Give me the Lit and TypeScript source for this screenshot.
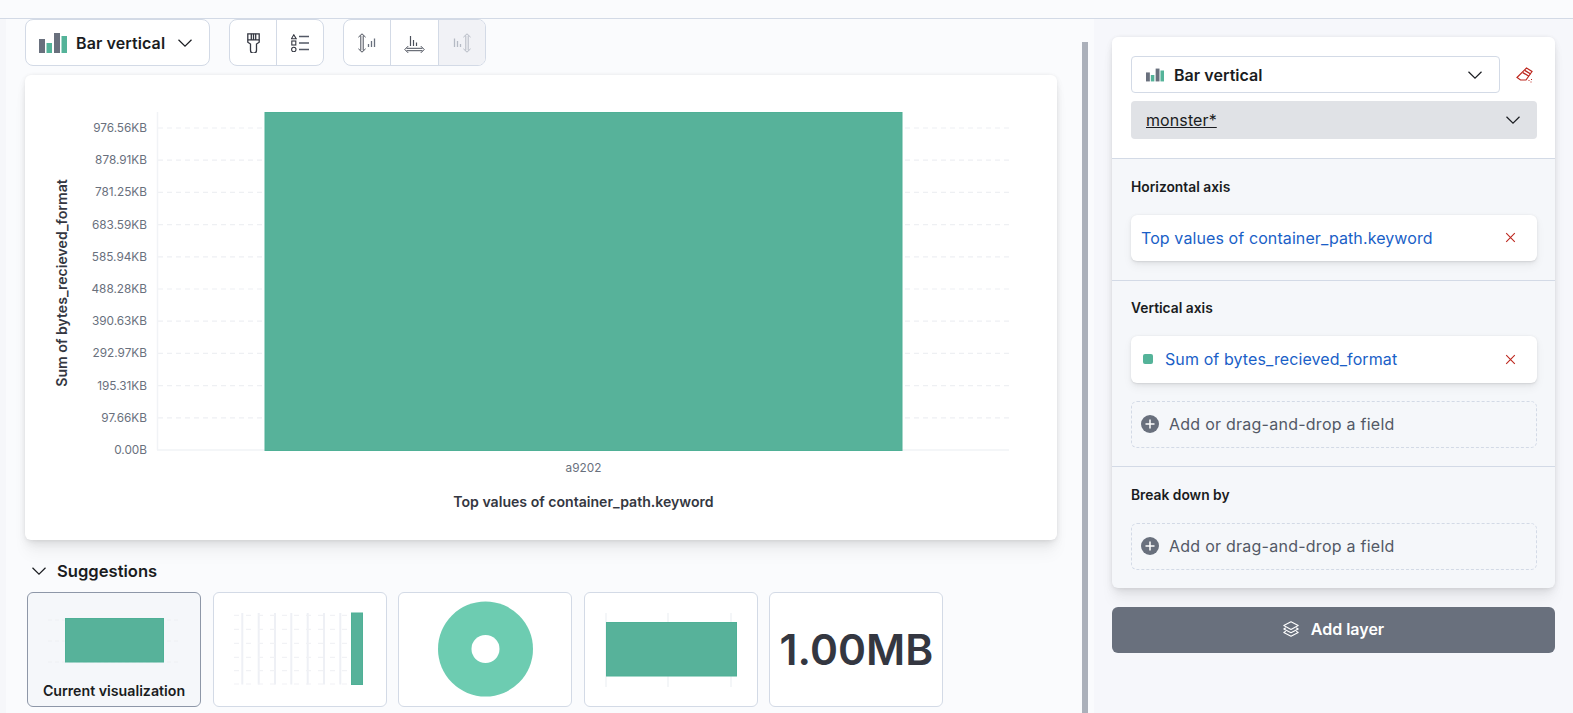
import { LitElement, html, css, svg, CSSResult, TemplateResult } from "lit";
import { customElement } from "lit/decorators.js";

const GREEN = "#54b399";
const TICKS = [
    "976.56KB", "878.91KB", "781.25KB", "683.59KB", "585.94KB",
    "488.28KB", "390.63KB", "292.97KB", "195.31KB", "97.66KB", "0.00B",
];

const chevron = (size = 16): TemplateResult => html`
    <svg width=${size} height=${size} viewBox="0 0 16 16" fill="none" stroke="#1a1c21" stroke-width="1.2">
        <path d="M1.5 4.800 8 11.200l6.500-6.400" />
    </svg>
`;

const barsIcon = (w: number, h: number): TemplateResult => html`
    <svg width=${w} height=${h} viewBox="0 0 28 20">
        <rect x="0" y="6" width="6" height="14" fill="#69707d" />
        <rect x="7.500" y="10" width="5.500" height="10" fill=${GREEN} />
        <rect x="15" y="0" width="6" height="20" fill="#69707d" />
        <rect x="22.500" y="3" width="5.500" height="17" fill=${GREEN} />
    </svg>
`;

const closeIcon = html`
    <svg width="11" height="11" viewBox="0 0 11 11" stroke="#bd271e" stroke-width="1.1" fill="none">
        <path d="M1.200 1.200l8.600 8.600M9.800 1.200l-8.600 8.600" />
    </svg>
`;

const plusIcon = html`
    <svg width="18" height="18" viewBox="0 0 18 18">
        <circle cx="9" cy="9" r="9" fill="#69707d" />
        <path d="M9 4.500v9M4.500 9h9" stroke="#fff" stroke-width="1.500" />
    </svg>
`;

const brushIcon = html`
    <svg width="13" height="20" viewBox="0 0 13 20" fill="none" stroke="#343741" stroke-width="1.300">
        <path d="M.8.800h11.400v8.400L9.500 11v6.200a3 3 0 0 1-6 0V11L.8 9.200z" />
        <path d="M.8 6.800h11.400M4.300.8v6M6.500.8v6M8.700.8v6" />
    </svg>
`;

const legendIcon = html`
    <svg width="18" height="18" viewBox="0 0 18 18" fill="none" stroke="#343741" stroke-width="1.100">
        <path d="M2.800.8 5.200 4.800H.4z" />
        <rect x=".8" y="7" width="4" height="4" />
        <circle cx="2.800" cy="15.500" r="2.200" />
        <path d="M8 2.500h10M8 9h10M8 15.500h10" stroke="#535966" stroke-width="1.400" />
    </svg>
`;

const vArrow = (x: number, c: string) => svg`
    <path d="M${x - 3.6} 4.200 ${x} .8l3.600 3.400M${x - 3.6} 15.800 ${x} 19.200l3.600-3.400M${x - 1.2} 2.600v14.800M${x + 1.2} 2.600v14.800"
        stroke=${c} fill="none" stroke-width="1" />
`;

const axisLeftIcon = html`
    <svg width="18" height="20" viewBox="0 0 18 20">
        ${vArrow(4, "#4a4f5a")}
        <path d="M10.500 14v-3M13.500 14V8M16.500 14V5.500" stroke="#69707d" stroke-width="1.300" fill="none" />
    </svg>
`;

const axisBottomIcon = html`
    <svg width="21" height="20" viewBox="0 0 21 20" fill="none" stroke="#4a4f5a" stroke-width="1">
        <path d="M6.500 13V3M9.500 13V7M12.500 13V9.500" stroke-width="1.200" />
        <path d="M4.200 13.100.8 16.500l3.400 3.400M16.800 13.100l3.400 3.400-3.400 3.400M2.600 15.300h15.800M2.600 17.700h15.800" />
    </svg>
`;

const axisRightIcon = html`
    <svg width="18" height="20" viewBox="0 0 18 20">
        <path d="M1.500 14V5.500M4.500 14V8M7.500 14v-3" stroke="#b5bac4" stroke-width="1.300" fill="none" />
        ${vArrow(14, "#b5bac4")}
    </svg>
`;

const eraserIcon = html`
    <svg width="17" height="16" viewBox="0 0 17 16" fill="none" stroke="#bd271e" stroke-width="1.200">
        <path d="M10.500 1 16 4.500 10 13H4.500L1 10.500z" />
        <path d="M6.800 5.600 13 9.300M8.700 3.400l6 3.600" stroke-width="1.300" />
        <path d="M12.500 13.500h1M15 12.500h1M14.500 15h1" />
    </svg>
`;

const layersIcon = html`
    <svg width="16" height="16" viewBox="0 0 16 16" fill="none" stroke="#fff" stroke-width="1.100" stroke-linejoin="round">
        <path d="M8 .8 15.200 4.600 8 8.400.8 4.600z" />
        <path d="M2.800 6.800.8 8 8 11.800 15.200 8l-2-1.200" />
        <path d="M2.800 10.200.8 11.400 8 15.200l7.200-3.800-2-1.200" />
    </svg>
`;

@customElement("lens-chart")
export class LensChart extends LitElement {
    static get styles(): CSSResult {
        return css`
            :host {
                display: block;
            }

            svg {
                display: block;
            }

            text {
                font-family: Inter, "Liberation Sans", sans-serif;
            }

            .tick {
                fill: #69707d;
                font-size: 11.800px;
            }

            .title {
                fill: #343741;
                font-size: 14.100px;
                font-weight: 600;
            }
        `;
    }

    render(): TemplateResult {
        const top = 53;
        const step = 32.2;

        return html`
            <svg width="1032" height="465" viewBox="0 0 1032 465">
                ${TICKS.map((label, i) => {
                    const y = top + i * step;
                    return svg`
                        ${i < TICKS.length - 1
                            ? svg`<line x1="133" x2="984" y1=${y} y2=${y} stroke="#eef0f3" stroke-width="1.2" stroke-dasharray="5 4" />`
                            : null}
                        <text class="tick" x="122" y=${y + 4} text-anchor="end">${label}</text>
                    `;
                })}
                <line x1="132.500" x2="132.500" y1="37" y2="375" stroke="#f1f3f6" stroke-width="1.500" />
                <line x1="132" x2="984" y1="375" y2="375" stroke="#f1f3f6" stroke-width="1.500" />
                <rect x="240" y="37.500" width="637" height="338" fill="#57b29a" stroke="#4fb096" />
                <text class="tick" x="558.500" y="397" text-anchor="middle">a9202</text>
                <text class="title" x="558.500" y="432" text-anchor="middle">Top values of container_path.keyword</text>
                <text class="title" transform="translate(42 208) rotate(-90)" text-anchor="middle">Sum of bytes_recieved_format</text>
            </svg>
        `;
    }
}

@customElement("app-root")
export class AppRoot extends LitElement {
    static get styles(): CSSResult {
        return css`
            :host {
                background-color: #fafbfd;
                color: #1a1c21;
                display: block;
                font-family: Inter, "Liberation Sans", sans-serif;
                height: 713px;
                overflow: hidden;
                width: 1573px;
            }

            svg {
                display: block;
                flex: none;
            }

            .topbar {
                border-bottom: 1px solid #d3dae6;
                height: 18px;
            }

            .main {
                display: flex;
                height: 694px;
            }

            .strip {
                background-color: #f6f7fa;
                flex: none;
                width: 6px;
            }

            .workspace {
                flex: none;
                padding-left: 19px;
                width: 1032px;
            }

            .toolbar {
                display: flex;
                gap: 19px;
                height: 47px;
            }

            .tool-btn {
                align-items: center;
                background-color: #fff;
                border: 1px solid #d3dae6;
                border-radius: 8px;
                box-sizing: border-box;
                display: flex;
                font-size: 16px;
                font-weight: 600;
                gap: 9px;
                letter-spacing: 0.1px;
                padding: 0 16px 0 13px;
                width: 185px;
            }

            .tool-group {
                background-color: #fff;
                border: 1px solid #d3dae6;
                border-radius: 8px;
                box-sizing: border-box;
                display: flex;
                overflow: hidden;
                width: 143px;
            }

            .tool-group.narrow {
                width: 95px;
            }

            .tool-group > div {
                align-items: center;
                display: flex;
                flex: 1;
                justify-content: center;
            }

            .tool-group > div + div {
                border-left: 1px solid #d3dae6;
            }

            .tool-group > div.disabled {
                background-color: #f1f2f6;
            }

            .chart-card {
                background-color: #fff;
                border-radius: 6px;
                box-shadow: 0 0.9px 4px -1px rgba(0, 0, 0, 0.08),
                    0 2.6px 8px -1px rgba(0, 0, 0, 0.06),
                    0 5.7px 12px -1px rgba(0, 0, 0, 0.05),
                    0 15px 15px -1px rgba(0, 0, 0, 0.04);
                height: 465px;
                margin-top: 9px;
            }

            .suggestions-head {
                align-items: center;
                display: flex;
                font-size: 16.600px;
                font-weight: 600;
                gap: 10px;
                height: 20px;
                margin: 21px 0 11px 6px;
            }

            .suggestions {
                display: flex;
                gap: 11.600px;
                margin-left: 2px;
            }

            .thumb {
                align-items: center;
                background-color: #fff;
                border: 1px solid #d3dae6;
                border-radius: 6px;
                box-sizing: border-box;
                display: flex;
                flex-direction: column;
                height: 115px;
                justify-content: center;
                overflow: hidden;
                width: 174px;
            }

            .thumb.current {
                background-color: #f5f7fa;
                border-color: #8e97a8;
                justify-content: flex-start;
            }

            .thumb-label {
                font-size: 14.200px;
                font-weight: 600;
                line-height: 16px;
                margin-top: -1px;
            }

            .metric {
                color: #343741;
                font-size: 42.500px;
                font-weight: 600;
            }

            .scrollbar {
                background-color: #abb0ba;
                flex: none;
                margin: 23px 0 0 25px;
                width: 6px;
            }

            .side {
                background-color: #f6f7fb;
                box-sizing: border-box;
                flex: none;
                margin-left: 6px;
                padding: 18px 18px 0;
                width: 479px;
            }

            .panel {
                background-color: #f5f7fa;
                border-radius: 6px;
                box-shadow: 0 0.9px 4px -1px rgba(0, 0, 0, 0.08),
                    0 2.6px 8px -1px rgba(0, 0, 0, 0.06),
                    0 5.7px 12px -1px rgba(0, 0, 0, 0.05),
                    0 15px 15px -1px rgba(0, 0, 0, 0.04);
            }

            .panel-head {
                background-color: #fff;
                border-radius: 6px 6px 0 0;
                display: flex;
                flex-direction: column;
                gap: 8px;
                padding: 19px 18px 19px 19px;
            }

            .select-row {
                align-items: center;
                display: flex;
                gap: 16px;
            }

            .select {
                align-items: center;
                background-color: #fff;
                border: 1px solid #d3dae6;
                border-radius: 4px;
                box-sizing: border-box;
                display: flex;
                font-size: 16px;
                font-weight: 600;
                gap: 10px;
                height: 37px;
                letter-spacing: 0.05px;
                padding: 0 16px 0 14px;
                width: 369px;
            }

            .grow {
                flex: 1;
            }

            .index {
                align-items: center;
                background-color: #e0e2e6;
                border-radius: 4px;
                box-sizing: border-box;
                display: flex;
                font-size: 16px;
                height: 38px;
                padding: 0 16px 1px 15px;
            }

            .index span {
                flex: 1;
                letter-spacing: 0.1px;
                text-decoration: underline;
            }

            .section {
                border-top: 1px solid #d3dae6;
                display: flex;
                flex-direction: column;
                gap: 18px;
                padding: 17.500px 18px 18.500px 19px;
            }

            .section.last {
                padding-bottom: 18.500px;
                padding-top: 18px;
            }

            .section.last .drop {
                height: 46.500px;
                padding-bottom: 1px;
            }

            .label {
                font-size: 13.800px;
                font-weight: 600;
                line-height: 20px;
            }

            .field {
                align-items: center;
                background-color: #fff;
                border-radius: 6px;
                box-shadow: 0 0.7px 1.4px rgba(0, 0, 0, 0.07),
                    0 1.9px 4px rgba(0, 0, 0, 0.05),
                    0 4.5px 10px rgba(0, 0, 0, 0.05);
                color: #1a5fc7;
                display: flex;
                font-size: 16px;
                gap: 12px;
                height: 46.500px;
                letter-spacing: 0.1px;
                padding: 0 21px 0 10px;
            }

            .field span {
                flex: 1;
            }

            .swatch {
                background-color: #54b399;
                border-radius: 2px;
                flex: none;
                height: 10px;
                margin-left: 2px;
                width: 10px;
            }

            .drop {
                align-items: center;
                border: 1px dashed #d3dae6;
                border-radius: 6px;
                box-sizing: border-box;
                color: #535966;
                display: flex;
                font-size: 16px;
                gap: 10px;
                height: 47px;
                letter-spacing: 0.25px;
                padding-left: 9px;
            }

            .add-layer {
                align-items: center;
                background-color: #69707d;
                border-radius: 6px;
                box-sizing: border-box;
                color: #fff;
                display: flex;
                font-size: 16px;
                font-weight: 600;
                gap: 12px;
                height: 46px;
                justify-content: center;
                margin-top: 18.500px;
                padding-bottom: 1px;
            }
        `;
    }

    render(): TemplateResult {
        return html`
            <div class="topbar"></div>
            <div class="main">
                <div class="strip"></div>
                <div class="workspace">
                    <div class="toolbar">
                        <div class="tool-btn">
                            ${barsIcon(28, 20)}
                            <span class="grow">Bar vertical</span>
                            ${chevron()}
                        </div>
                        <div class="tool-group narrow">
                            <div>${brushIcon}</div>
                            <div>${legendIcon}</div>
                        </div>
                        <div class="tool-group">
                            <div>${axisLeftIcon}</div>
                            <div>${axisBottomIcon}</div>
                            <div class="disabled">${axisRightIcon}</div>
                        </div>
                    </div>
                    <div class="chart-card"><lens-chart></lens-chart></div>
                    <div class="suggestions-head">${chevron()}<span>Suggestions</span></div>
                    <div class="suggestions">
                        <div class="thumb current">
                            <svg width="172" height="91" viewBox="0 0 172 91">
                                <g stroke="#eef0f3" stroke-dasharray="4 3">
                                    <path d="M20 27h132M20 48h132M20 69h132" />
                                </g>
                                <rect x="37.500" y="25.500" width="98" height="43.500" fill="#57b29a" stroke="#4fb096" />
                            </svg>
                            <div class="thumb-label">Current visualization</div>
                        </div>
                        <div class="thumb">
                            <svg width="172" height="113" viewBox="0 0 172 113">
                                <g stroke="#eef0f5" stroke-width="2">
                                    <path d="M28.300 20v71.500M44.700 20v71.500M61 20v71.500M77.300 20v71.500M93.700 20v71.500M110 20v71.500M126.300 20v71.500" />
                                </g>
                                <g stroke="#f1f2f5" stroke-width="1.200" stroke-dasharray="5 7">
                                    <path d="M20 22.300h117M20 36.300h117M20 50.300h117M20 64.300h117M20 77.700h117M20 91h117" />
                                </g>
                                <rect x="137.500" y="20" width="11" height="71.500" fill="#57b29a" stroke="#4fb096" />
                            </svg>
                        </div>
                        <div class="thumb">
                            <svg width="172" height="113" viewBox="0 0 172 113">
                                <circle cx="86.500" cy="56" r="47.500" fill="#6dccb1" />
                                <circle cx="86.500" cy="56" r="14" fill="#fff" />
                            </svg>
                        </div>
                        <div class="thumb">
                            <svg width="172" height="113" viewBox="0 0 172 113">
                                <path d="M21 20v74M83 20v74M146 20v74" stroke="#f1f3f6" stroke-width="1.500" />
                                <rect x="21.500" y="29.500" width="130" height="53.500" fill="#57b29a" stroke="#4fb096" />
                            </svg>
                        </div>
                        <div class="thumb"><div class="metric">1.00MB</div></div>
                    </div>
                </div>
                <div class="scrollbar"></div>
                <div class="side">
                    <div class="panel">
                        <div class="panel-head">
                            <div class="select-row">
                                <div class="select">
                                    ${barsIcon(18, 14)}
                                    <span class="grow">Bar vertical</span>
                                    ${chevron()}
                                </div>
                                ${eraserIcon}
                            </div>
                            <div class="index"><span>monster*</span>${chevron()}</div>
                        </div>
                        <div class="section">
                            <div class="label">Horizontal axis</div>
                            <div class="field"><span>Top values of container_path.keyword</span>${closeIcon}</div>
                        </div>
                        <div class="section">
                            <div class="label">Vertical axis</div>
                            <div class="field">
                                <div class="swatch"></div>
                                <span>Sum of bytes_recieved_format</span>
                                ${closeIcon}
                            </div>
                            <div class="drop">${plusIcon}<span>Add or drag-and-drop a field</span></div>
                        </div>
                        <div class="section last">
                            <div class="label">Break down by</div>
                            <div class="drop">${plusIcon}<span>Add or drag-and-drop a field</span></div>
                        </div>
                    </div>
                    <div class="add-layer">${layersIcon}<span>Add layer</span></div>
                </div>
            </div>
        `;
    }
}
